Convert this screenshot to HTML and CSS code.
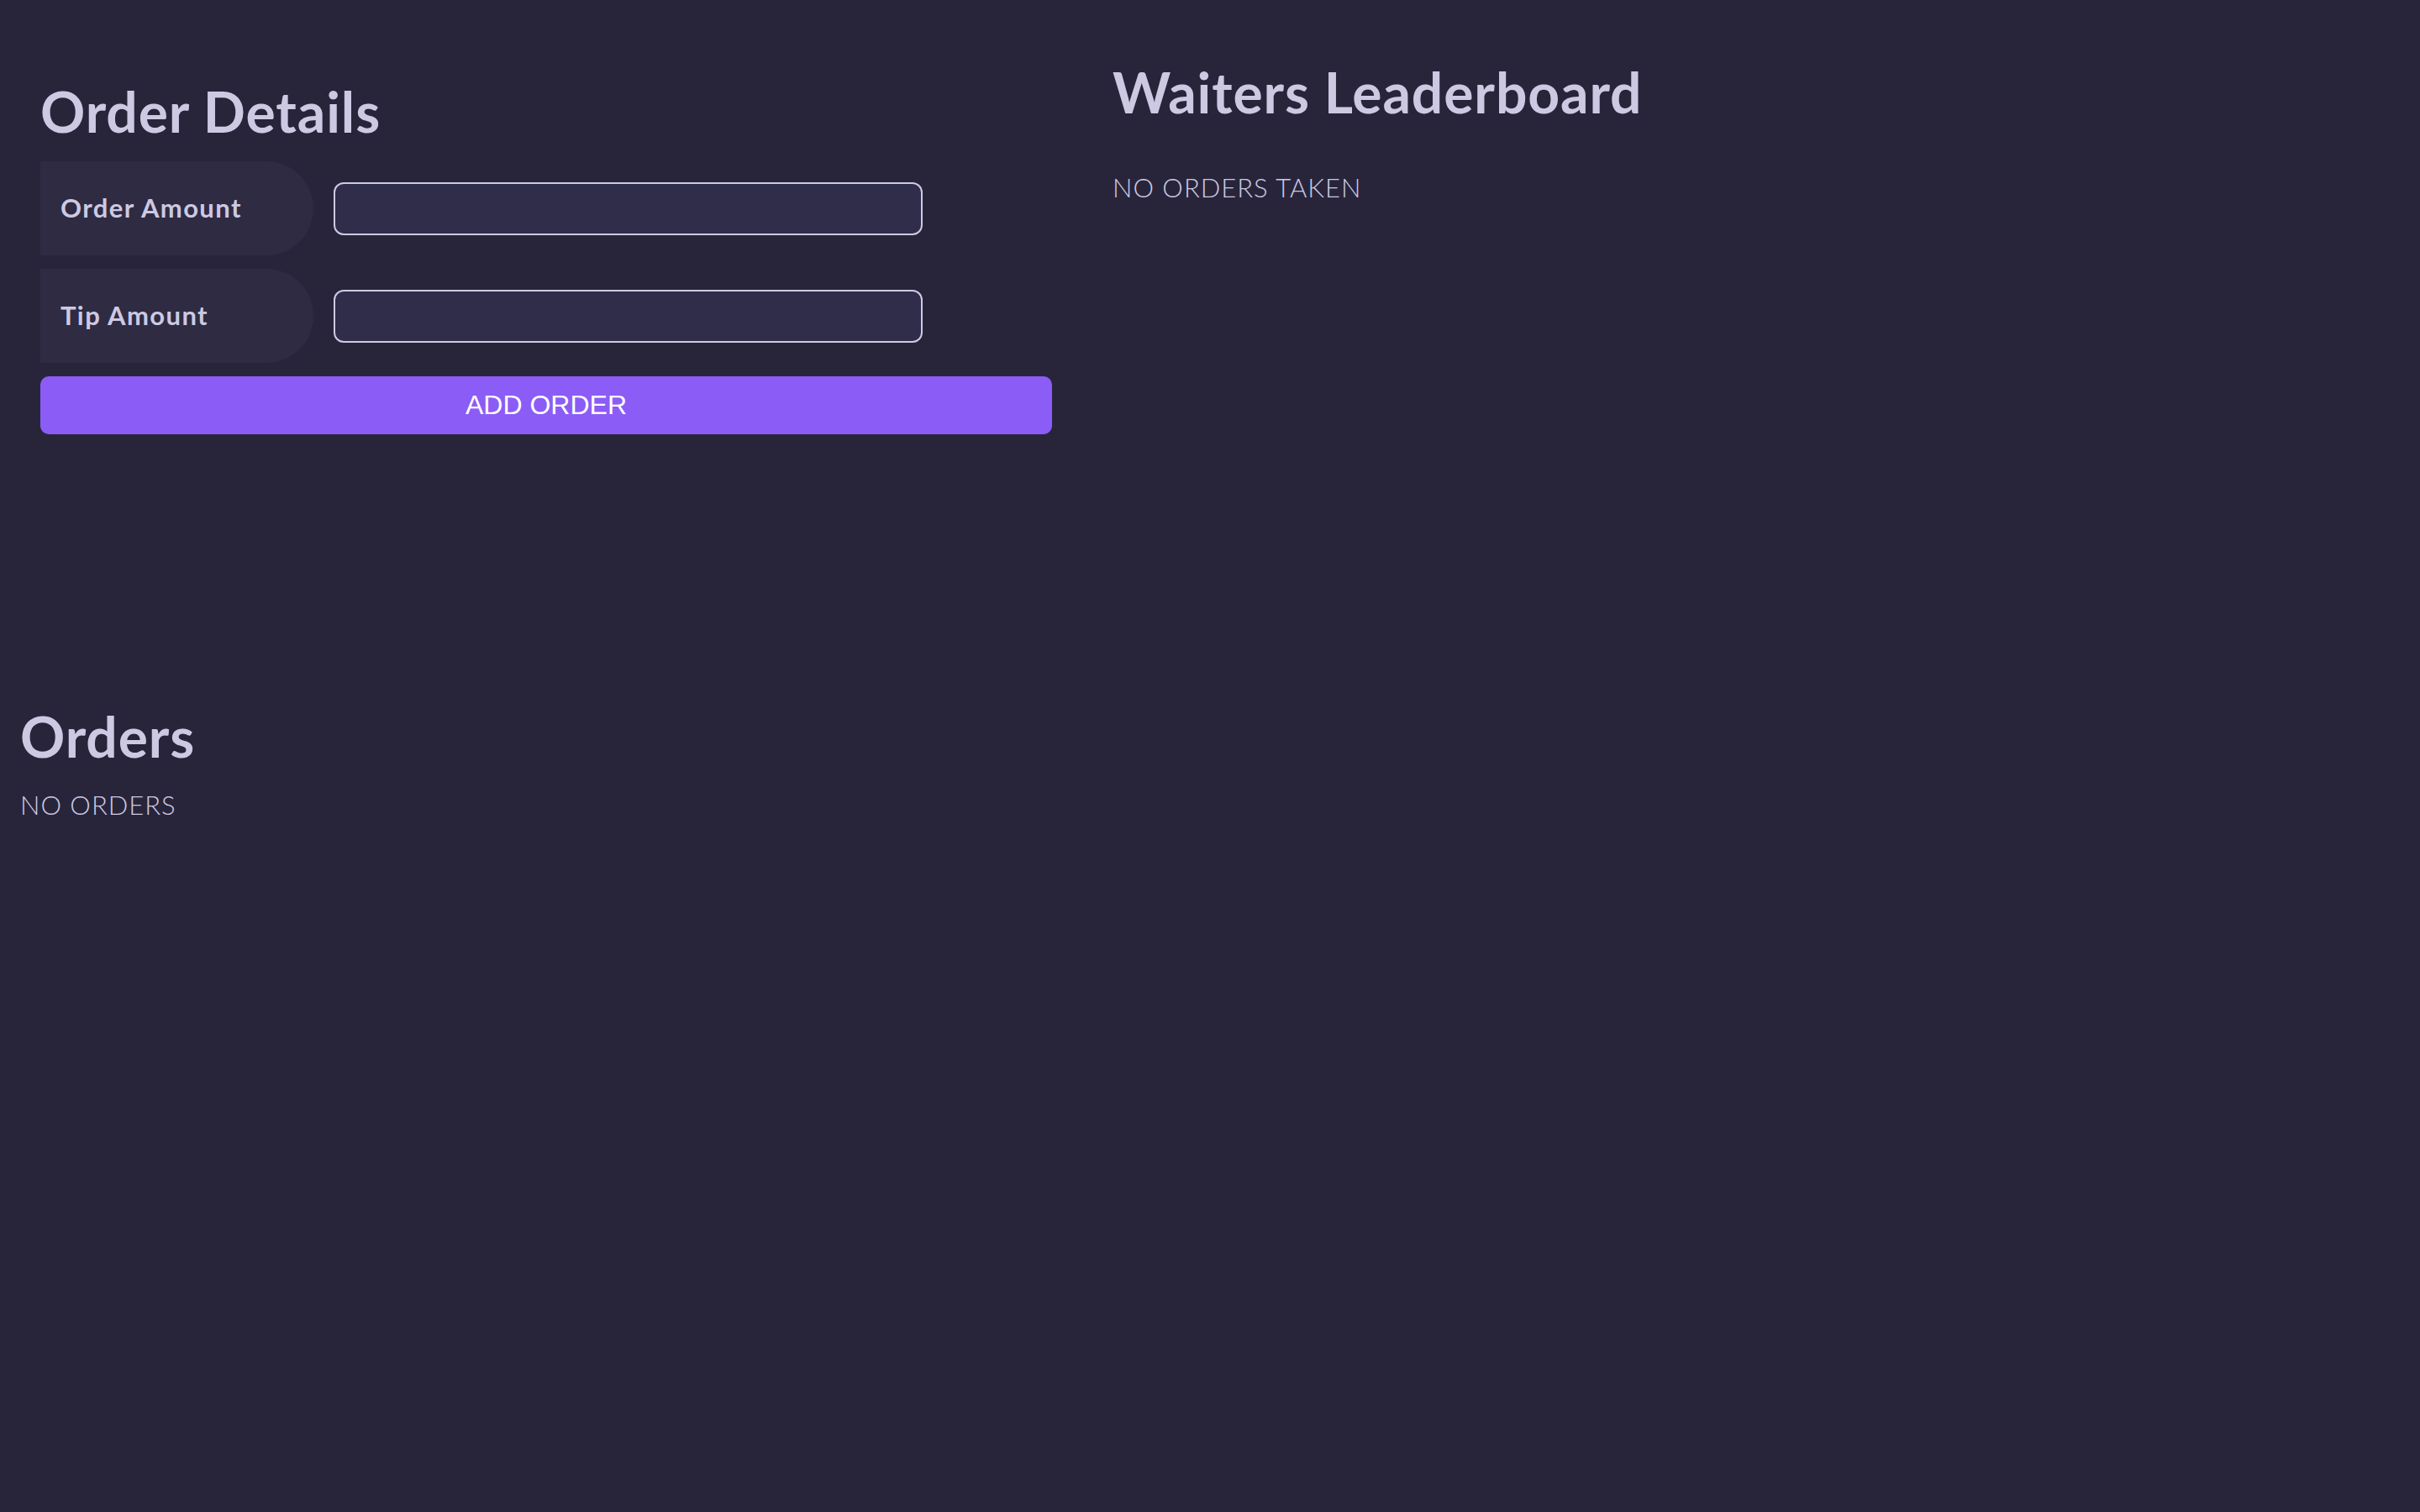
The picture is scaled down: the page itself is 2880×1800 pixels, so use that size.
FILE: index.html
```html
<!DOCTYPE html>
<html lang="en">
<head>
<meta charset="utf-8">
<title>Waiters</title>
<link rel="stylesheet" href="styles.css">
</head>
<body>
<div class="top">
  <section class="order-form">
    <h1 class="title title-left">Order Details</h1>
    <div class="rows">
      <div class="row">
        <label class="label" for="amount">Order Amount</label>
        <input class="field" id="amount" type="text">
      </div>
      <div class="row">
        <label class="label" for="tip">Tip Amount</label>
        <input class="field" id="tip" type="text">
      </div>
      <button class="add-btn" type="button">ADD ORDER</button>
    </div>
  </section>
  <section class="board">
    <h1 class="title title-right">Waiters Leaderboard</h1>
    <p class="empty empty-board">NO ORDERS TAKEN</p>
  </section>
</div>
<section class="orders">
  <h2 class="title">Orders</h2>
  <p class="empty empty-orders">NO ORDERS</p>
</section>
</body>
</html>
```

FILE: styles.css
```css
html, body {
  margin: 0;
  padding: 0;
  background: #28253b;
  height: 100%;
}
body {
  font-family: Lato, "Open Sans", sans-serif;
  color: #cdc9e2;
}
.top {
  display: grid;
  grid-template-columns: 1204px 1fr;
  column-gap: 72px;
  padding-left: 48px;
}
.title {
  margin: 0;
  font-size: 66px;
  line-height: 79px;
  font-weight: 700;
  letter-spacing: 0.9px;
}
.title-left {
  margin-top: 93px;
}
.title-right {
  margin-top: 70px;
}
.rows {
  margin-top: 20px;
  display: flex;
  flex-direction: column;
  gap: 16px;
}
.row {
  display: flex;
  align-items: center;
  gap: 24px;
}
.label {
  box-sizing: border-box;
  width: 325px;
  height: 112px;
  padding-left: 24px;
  padding-bottom: 2px;
  display: flex;
  align-items: center;
  background: #2e2b43;
  border-radius: 0 56px 56px 0;
  font-size: 31px;
  font-weight: 700;
  letter-spacing: 1.4px;
}
.field {
  box-sizing: border-box;
  width: 701px;
  height: 63px;
  margin: 0;
  background: #302d4b;
  border: 2px solid #cfcae4;
  border-radius: 12px;
  color: #cdc9e2;
  font-size: 28px;
  padding: 0 16px;
  outline: none;
}
.add-btn {
  box-sizing: border-box;
  width: 1204px;
  height: 69px;
  margin: 0;
  border: none;
  border-radius: 10px;
  background: #8b5cf6;
  color: #ffffff;
  font-family: "Liberation Sans", Arial, sans-serif;
  font-size: 32px;
  cursor: pointer;
}
.empty {
  margin: 0;
  font-size: 31px;
  line-height: 37px;
  font-weight: 300;
  letter-spacing: 1px;
}
.empty-board {
  margin-top: 56px;
}
.orders {
  padding-left: 24px;
  margin-top: 320px;
}
.empty-orders {
  margin-top: 24px;
}
```
